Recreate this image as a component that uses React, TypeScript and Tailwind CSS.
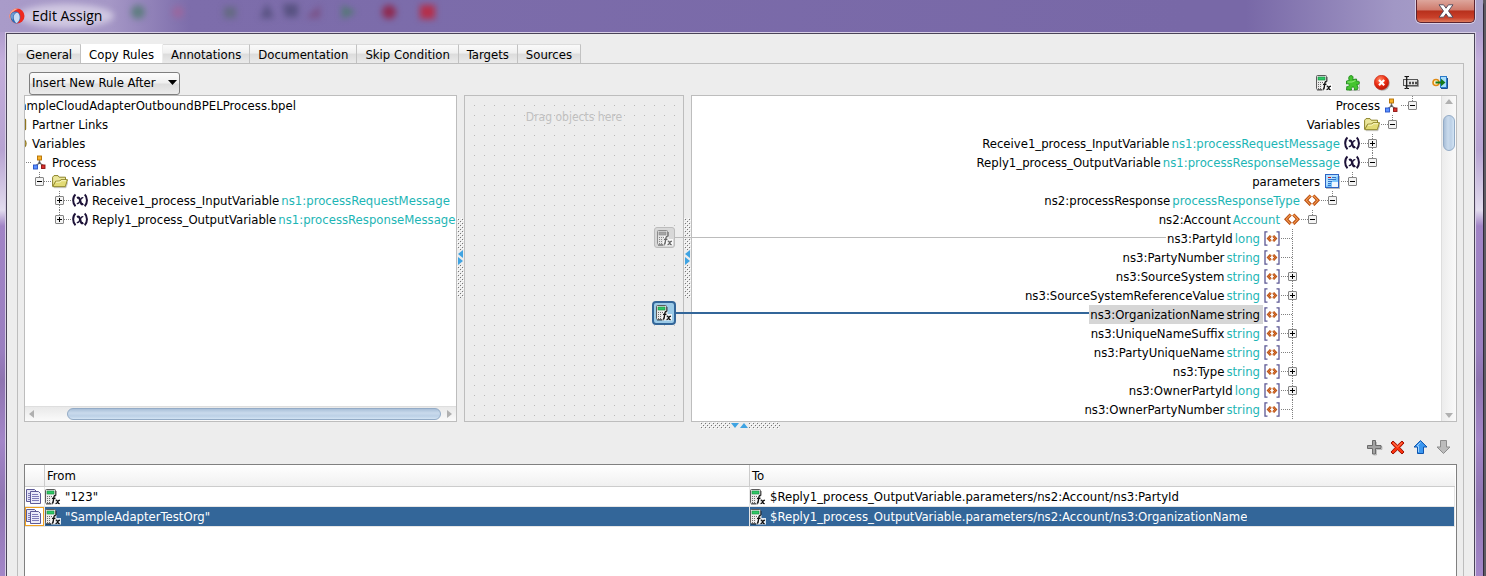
import React, { useState } from "react";

type IconProps = { muted?: boolean };

function CalcIcon({ muted = false }: IconProps) {
  const key = muted ? "#8a8a8a" : "#6d6d6d";
  const ink = muted ? "#666" : "#111";
  return (
    <svg width="16" height="16" viewBox="0 0 16 16" aria-hidden="true" className="block shrink-0">
      <rect x="0.5" y="0.5" width="10" height="14" rx="1" fill={muted ? "#e4e4e4" : "#eceaea"} stroke={muted ? "#8c8c8c" : "#5b5b5b"} />
      <path d="M11.500 2v5M1 15.500h7" stroke="#00000055" />
      <rect x="2" y="2" width="7" height="3" fill={muted ? "#a5a5a5" : "#2fc765"} stroke={muted ? "#8a8a8a" : "#138a3d"} strokeWidth="0.6" />
      <path d="M2 7h1v1H2zM4 7h1v1H4zM6 7h1v1H6zM2 9h1v1H2zM4 9h1v1H4zM2 11h1v1H2zM4 11h1v1H4zM2 13h1v1H2zM4 13h1v1H4z" fill={key} />
      <path d="M7 6h4.500v3H16v6.500H6V11h1z" fill="#fff" fillOpacity="0.85" />
      <path d="M10.800 6.600c-1.200-.5-1.700.3-1.900 1.500L8.100 13c-.2.900-.6 1.200-1.300.9M7 9.400h3.400" fill="none" stroke={ink} strokeWidth="1.400" />
      <path d="M10.800 11.200l1 .2 1.700 3 1.200.2M14.900 11.100l-1.300.5-1.900 2.600-1.200.5" fill="none" stroke={ink} strokeWidth="1.200" />
    </svg>
  );
}

function PuzzleIcon() {
  return (
    <svg width="16" height="16" viewBox="0 0 16 16" aria-hidden="true" className="block">
      <path d="M14.500 6v9.500H4" stroke="#00000033" fill="none" />
      <path d="M1.500 6l2.800-.5C3.300 3.500 3.500.8 5.800.6s2.800 2 1.800 4L11.500 4l.3 2.600c1.200-.8 2.500-.3 2.500 1.200 0 1.600-1.400 2.100-2.500 1.500l1.200 3.200-.5 2-3.200.5c.6-2-.3-3-1.500-3s-1.900 1.200-1.200 3H1.500l.3-3.500c1.500.4 2.400-.3 2.400-1.500S3 8.400 1.500 9z" fill="#45c52f" stroke="#1f8a1c" strokeWidth="0.900" />
      <path d="M2.500 7h4.500l3.500-1.500" stroke="#94ec7c" fill="none" />
    </svg>
  );
}

function DeleteRoundIcon() {
  return (
    <svg width="16" height="16" viewBox="0 0 16 16" aria-hidden="true" className="block">
      <defs>
        <radialGradient id="ball" cx="0.4" cy="0.3" r="0.8">
          <stop offset="0" stopColor="#ff8a66" />
          <stop offset="0.5" stopColor="#ec2d12" />
          <stop offset="1" stopColor="#a80f05" />
        </radialGradient>
      </defs>
      <circle cx="8.500" cy="8.500" r="7.300" fill="#00000044" />
      <circle cx="7.500" cy="7.500" r="7.200" fill="url(#ball)" stroke="#c4200c" strokeWidth="0.600" />
      <path d="M5 5l5.200 5.200M10.200 5L5 10.200" stroke="#fff" strokeWidth="2.200" />
    </svg>
  );
}

function RenameIcon() {
  return (
    <svg width="16" height="16" viewBox="0 0 16 16" aria-hidden="true" className="block">
      <rect x="0.500" y="4.500" width="14" height="6" fill="#e6e6e6" stroke="#555" />
      <path d="M2 11.500h13.500V5" stroke="#999" fill="none" />
      <path d="M6.500 7h1v2h-1zM9.500 7h1v2h-1zM12.500 7h1v2h-1z" fill="#999" stroke="#444" strokeWidth="0.900" />
      <path d="M1.500 1.500h1.500l.7.800.8-.8H6M1.500 13.500h1.500l.7-.8.800.8H6M3.700 2v11" fill="none" stroke="#111" strokeWidth="1.200" />
    </svg>
  );
}

function GoToIcon() {
  return (
    <svg width="16" height="16" viewBox="0 0 16 16" aria-hidden="true" className="block">
      <rect x="8.500" y="1.500" width="6" height="11" fill="#a9defc" stroke="#2b7bc9" />
      <path d="M15.500 3v10.500H9" stroke="#1d4f93" fill="none" />
      <circle cx="4" cy="7.500" r="3" fill="#fff3c8" stroke="#e08a12" strokeWidth="1.600" />
      <path d="M3.500 7.500H11" stroke="#157a1b" strokeWidth="2" />
      <path d="M9 3.700l4.500 3.800L9 11.300z" fill="#157a1b" />
    </svg>
  );
}

function ProcessIcon() {
  return (
    <svg width="16" height="16" viewBox="0 0 16 16" aria-hidden="true" className="block">
      <path d="M7.500 5v3.500M7.500 8L4 10.500M7.500 8l4 2.500" stroke="#777" strokeWidth="1.300" fill="none" />
      <rect x="5.500" y="1" width="4" height="4" fill="#f9b32a" stroke="#b36f00" strokeWidth="0.900" />
      <rect x="1.500" y="10" width="4" height="4" fill="#5d93ff" stroke="#2450c8" strokeWidth="0.900" />
      <rect x="9.500" y="10" width="3.500" height="3.500" fill="#d9302c" stroke="#8d1512" strokeWidth="0.900" />
      <rect x="6.500" y="6.800" width="2" height="2" fill="#555" />
    </svg>
  );
}

function FolderIcon() {
  return (
    <svg width="16" height="16" viewBox="0 0 16 16" aria-hidden="true" className="block">
      <path d="M.6 12V3.200L2 1.600h4l1.200 1.600h6.300v3" fill="#ece79b" stroke="#8c8328" />
      <path d="M.7 12.700L3.600 7.200l4.200-.2 1-1.300h6.700l-2.200 7z" fill="#e2db75" stroke="#8c8328" />
      <path d="M4 8.200L8.300 8l1-1.300H14" fill="none" stroke="#fbf8c6" />
      <path d="M2 13.700h12l2-6" fill="none" stroke="#00000033" />
    </svg>
  );
}

function PartnerIcon() {
  return (
    <svg width="16" height="16" viewBox="0 0 16 16" aria-hidden="true" className="block">
      <rect x="1.500" y="2.500" width="12" height="10" rx="0.500" fill="#e8da80" stroke="#8f7620" strokeWidth="1.400" />
    </svg>
  );
}

function VariableGroupIcon() {
  return (
    <svg width="16" height="16" viewBox="0 0 16 16" aria-hidden="true" className="block">
      <circle cx="9.300" cy="7.500" r="4.700" fill="#e8d060" stroke="#8f7620" strokeWidth="1.400" />
    </svg>
  );
}

function VariableIcon() {
  return (
    <svg width="16" height="16" viewBox="0 0 16 16" aria-hidden="true" className="block">
      <g fill="none" stroke="#1d1238">
        <path d="M3.500 1.500C.4 4 .4 10.500 3.500 13.300M12.700 1.500c3 2.500 3 9 0 11.800" strokeWidth="2" />
        <path d="M5 5c1.700-.9 2.400 0 2.900 1.800l.9 3c.4 1.400 1.100 1.800 2.500 1" strokeWidth="2.200" />
        <path d="M11.300 5c-1.200-.8-2 .2-3 2.200S6.500 11.300 4.800 10.300" strokeWidth="1.400" />
      </g>
    </svg>
  );
}

function PartIcon() {
  return (
    <svg width="16" height="16" viewBox="0 0 16 16" aria-hidden="true" className="block">
      <rect x="1.500" y="0.500" width="13" height="13" fill="#7cc6fb" stroke="#2c63c4" />
      <path d="M2 1h12v1L2 12z" fill="#b3e0ff" />
      <path d="M8 13V8h6v5z" fill="#eef7ff" />
      <path d="M4 3.500h3" stroke="#d41515" />
      <path d="M8 3.500h4M4 5.500h8M4 7.500h4M4 9.500h3M4 11.500h3" stroke="#3272c8" />
      <path d="M2 14.500h13.500V2" stroke="#00000044" fill="none" />
    </svg>
  );
}

function ElementIcon() {
  return (
    <svg width="16" height="16" viewBox="0 0 16 16" aria-hidden="true" className="block">
      <g fill="none">
        <path d="M6.700 2.500L2.200 7.200l4.500 4.700M9.300 2.500l4.500 4.700-4.500 4.700" stroke="#b4480f" strokeWidth="3.200" />
        <path d="M6.700 2.500L2.200 7.200l4.500 4.700M9.300 2.500l4.500 4.700-4.500 4.700" stroke="#f39a4c" strokeWidth="1.200" />
      </g>
    </svg>
  );
}

function SimpleElementIcon() {
  return (
    <svg width="16" height="16" viewBox="0 0 16 16" aria-hidden="true" className="block">
      <path d="M3.500.800H1v13.400h2.500M12.500.800H15v13.400h-2.500" fill="none" stroke="#5c5894" strokeWidth="1.300" />
      <g fill="none">
        <path d="M6.800 4.800L4.300 7.500l2.500 2.700M9.200 4.800l2.500 2.700-2.500 2.700" stroke="#b4480f" strokeWidth="2.500" />
        <path d="M6.800 4.800L4.300 7.500l2.500 2.700M9.200 4.800l2.500 2.700-2.500 2.700" stroke="#f0954a" strokeWidth="0.800" />
      </g>
    </svg>
  );
}

function CopyIcon() {
  return (
    <svg width="16" height="16" viewBox="0 0 16 16" aria-hidden="true" className="block">
      <path d="M.5.500h8l2 2v10H.5z" fill="#e4e4f6" stroke="#5e5a96" />
      <path d="M2 4.500h3M2 6.500h3M2 8.500h3M2 10.500h3" stroke="#7f7bb8" />
      <path d="M4.500 2.500h8l2 2v10h-10z" fill="#ececfa" stroke="#5e5a96" />
      <path d="M6 5.500h6M6 7.500h7M6 9.500h7M6 11.500h7" stroke="#7f7bb8" />
    </svg>
  );
}

function PlusIcon() {
  return (
    <svg width="16" height="16" viewBox="0 0 16 16" aria-hidden="true" className="block">
      <path d="M9.500 2v4.500H15v3H9.500V15h-3" fill="none" stroke="#00000033" />
      <path d="M5.500.500h3v5H14v3H8.500V14h-3V8.500H.5v-3h5z" fill="#a3a3a3" stroke="#6b6b6b" />
    </svg>
  );
}

function RemoveIcon() {
  return (
    <svg width="16" height="16" viewBox="0 0 16 16" aria-hidden="true" className="block">
      <path d="M3 1l4.500 4.200L12 1l2 2-4.200 4.500L14 12l-2 2-4.500-4.200L3 14l-2-2 4.200-4.500L1 3z" fill="#fb340f" stroke="#9c1205" />
      <path d="M3 2.800L7.500 7 12 2.800" fill="none" stroke="#ff9a78" strokeWidth="0.800" />
    </svg>
  );
}

function ArrowIcon({ down = false }: { down?: boolean }) {
  return (
    <svg width="16" height="16" viewBox="0 0 16 16" aria-hidden="true" className="block">
      {down ? (
        <path d="M4.500.500h6V7H14l-6.500 6.500L1 7h3.500z" fill="#bcbcbc" stroke="#8d8d8d" />
      ) : (
        <>
          <path d="M7.500.600L14 7h-3.500v6.500h-6V7H1z" fill="#3b97f0" stroke="#0f55ae" />
          <path d="M7.500 2.500L4 6h1.500v6" fill="none" stroke="#9dd2ff" />
        </>
      )}
    </svg>
  );
}

function LogoIcon() {
  return (
    <svg width="16" height="16" viewBox="0 0 16 16" aria-hidden="true" className="block shrink-0">
      <circle cx="8" cy="8" r="7.500" fill="#ee2a20" />
      <path d="M8 15.500A7.500 7.500 0 1 1 9.500.700C6 2 3.500 3.500 3 6.500z" fill="#f4a592" />
      <path d="M1.500 6.500C3 3.800 6 2.800 8.500 4c2.700 1.300 3.300 4.500 2.500 7.200-.6 2-1.700 3.400-3.200 4.200C4 15.500.8 12 1.500 6.500z" fill="#3268b4" />
      <path d="M8 4.500c-2.500.8-3.700 3.200-3.200 6 .3 1.800 1.200 3.500 2.700 4.700 2.200-1.300 3.400-3.800 3.200-6.300C10.500 6.600 9.600 5 8 4.500z" fill="#c9dcf2" />
      <path d="M2 7c1-2 3-3 5-2.500C4.500 6 3.500 8.500 4 12 2.300 11 1.600 9 2 7z" fill="#6f9bd2" />
    </svg>
  );
}

type IconKind = "process" | "folder" | "variable" | "part" | "element" | "simple" | "partner" | "group";

function NodeIcon({ kind }: { kind: IconKind }) {
  switch (kind) {
    case "process": return <ProcessIcon />;
    case "folder": return <FolderIcon />;
    case "variable": return <VariableIcon />;
    case "part": return <PartIcon />;
    case "element": return <ElementIcon />;
    case "simple": return <SimpleElementIcon />;
    case "partner": return <PartnerIcon />;
    case "group": return <VariableGroupIcon />;
  }
}

type Toggle = "plus" | "minus" | "none";

/* Expander box with its dotted guides; the box sits at the left of the drawing. */
function Expander({ toggle, continues = false, flip = false }: { toggle: Toggle; continues?: boolean; flip?: boolean }) {
  return (
    <svg width="16" height="19" viewBox="0 0 16 19" aria-hidden="true" className={flip ? "block shrink-0 -scale-x-100" : "block shrink-0"}>
      <path d={continues ? "M4.500 0v19" : "M4.500 0v9"} stroke="#808080" strokeDasharray="1 1" />
      <path d="M5 9.500h11" stroke="#808080" strokeDasharray="1 1" />
      {toggle !== "none" && (
        <>
          <rect x="0.500" y="5.500" width="8" height="8" rx="0.500" fill="#f4f4f4" stroke="#858585" />
          <path d="M2 9.500h5" stroke="#000" />
          {toggle === "plus" && <path d="M4.500 7v5" stroke="#000" />}
        </>
      )}
    </svg>
  );
}

type TreeNode = {
  label: string;
  type?: string;
  icon?: IconKind;
  toggle: Toggle;
  continues?: boolean;
  link?: "idle" | "active";
  children?: TreeNode[];
};

const sourceTree: TreeNode[] = [
  {
    label: "SampleCloudAdapterOutboundBPELProcess.bpel",
    icon: "process",
    toggle: "minus",
    children: [
      { label: "Partner Links", icon: "partner", toggle: "plus" },
      {
        label: "Variables",
        icon: "group",
        toggle: "minus",
        children: [
          {
            label: "Process",
            icon: "process",
            toggle: "minus",
            children: [
              {
                label: "Variables",
                icon: "folder",
                toggle: "minus",
                children: [
                  { label: "Receive1_process_InputVariable", type: "ns1:processRequestMessage", icon: "variable", toggle: "plus", continues: true },
                  { label: "Reply1_process_OutputVariable", type: "ns1:processResponseMessage", icon: "variable", toggle: "plus" },
                ],
              },
            ],
          },
        ],
      },
    ],
  },
];

const accountFields: TreeNode[] = [
  { label: "ns3:PartyId", type: "long", icon: "simple", toggle: "none", continues: true, link: "idle" },
  { label: "ns3:PartyNumber", type: "string", icon: "simple", toggle: "none", continues: true },
  { label: "ns3:SourceSystem", type: "string", icon: "simple", toggle: "plus", continues: true },
  { label: "ns3:SourceSystemReferenceValue", type: "string", icon: "simple", toggle: "plus", continues: true },
  { label: "ns3:OrganizationName", type: "string", icon: "simple", toggle: "none", continues: true, link: "active" },
  { label: "ns3:UniqueNameSuffix", type: "string", icon: "simple", toggle: "plus", continues: true },
  { label: "ns3:PartyUniqueName", type: "string", icon: "simple", toggle: "none", continues: true },
  { label: "ns3:Type", type: "string", icon: "simple", toggle: "plus", continues: true },
  { label: "ns3:OwnerPartyId", type: "long", icon: "simple", toggle: "plus", continues: true },
  { label: "ns3:OwnerPartyNumber", type: "string", icon: "simple", toggle: "none", continues: true },
];

const targetTree: TreeNode[] = [
  {
    label: "Process",
    icon: "process",
    toggle: "minus",
    children: [
      {
        label: "Variables",
        icon: "folder",
        toggle: "minus",
        children: [
          { label: "Receive1_process_InputVariable", type: "ns1:processRequestMessage", icon: "variable", toggle: "plus", continues: true },
          {
            label: "Reply1_process_OutputVariable",
            type: "ns1:processResponseMessage",
            icon: "variable",
            toggle: "minus",
            children: [
              {
                label: "parameters",
                icon: "part",
                toggle: "minus",
                children: [
                  {
                    label: "ns2:processResponse",
                    type: "processResponseType",
                    icon: "element",
                    toggle: "minus",
                    children: [{ label: "ns2:Account", type: "Account", icon: "element", toggle: "minus", children: accountFields }],
                  },
                ],
              },
            ],
          },
        ],
      },
    ],
  },
];

function SourceNodes({ nodes, nested = false }: { nodes: TreeNode[]; nested?: boolean }) {
  return (
    <ul className={nested ? "pl-5" : ""}>
      {nodes.map((node) => (
        <li key={node.label}>
          <div className="flex h-[19px] items-center whitespace-nowrap">
            <Expander toggle={node.toggle} continues={node.continues} />
            <span className="w-[21px] shrink-0 pl-px">{node.icon && <NodeIcon kind={node.icon} />}</span>
            <span className="flex gap-[2px]">
              <span>{node.label}</span>
              {node.type && <span className="text-[#1db5b5]">{node.type}</span>}
            </span>
          </div>
          {node.children && <SourceNodes nodes={node.children} nested />}
        </li>
      ))}
    </ul>
  );
}

function TargetNodes({ nodes, nested = false }: { nodes: TreeNode[]; nested?: boolean }) {
  return (
    <ul className={nested ? "pr-5" : ""}>
      {nodes.map((node) => (
        <li key={node.label}>
          <div className="flex h-[19px] items-center justify-end whitespace-nowrap">
            {node.link === "idle" && <span className="mb-[3px] h-px flex-1 bg-[#bcbcbc]" />}
            {node.link === "active" && <span className="mb-[3px] h-[2px] flex-1 bg-[#336699]" />}
            <span className={node.link === "active" ? "flex gap-[2px] bg-[#d6d6d6] pr-[3px] pl-px leading-[19px]" : "flex gap-[2px] pr-[3px] pl-px"}>
              <span>{node.label}</span>
              {node.type && <span className={node.link === "active" ? "" : "text-[#1db5b5]"}>{node.type}</span>}
            </span>
            <span className="w-[18px] shrink-0 pl-px">{node.icon && <NodeIcon kind={node.icon} />}</span>
            <Expander toggle={node.toggle} continues={node.continues} flip />
          </div>
          {node.children && <TargetNodes nodes={node.children} nested />}
        </li>
      ))}
    </ul>
  );
}

function Splitter({ horizontal = false }: { horizontal?: boolean }) {
  const id = horizontal ? "grip-h" : "grip-v";
  return (
    <svg width={horizontal ? 80 : 7} height={horizontal ? 7 : 80} viewBox={horizontal ? "0 0 80 7" : "0 0 7 80"} aria-hidden="true" className="block shrink-0">
      <defs>
        <pattern id={id} width="4" height="4" patternUnits="userSpaceOnUse">
          <path d="M1 1h1v1H1zM3 3h1v1H3z" fill="#777" />
          <path d="M2 2h1v1H2zM0 0h1v1H0z" fill="#fff" />
        </pattern>
      </defs>
      <rect width={horizontal ? 80 : 7} height={horizontal ? 7 : 80} fill={`url(#${id})`} />
      {horizontal ? (
        <>
          <path d="M30 0h19v7H30z" fill="#ededed" />
          <path d="M31 1h8l-4 5zM40 6h8l-4-5z" fill="#3fa3e2" />
        </>
      ) : (
        <>
          <path d="M0 32h7v15H0z" fill="#ededed" />
          <path d="M6 32v8l-5-4zM1 39v8l5-4z" fill="#3fa3e2" />
        </>
      )}
    </svg>
  );
}

const tabs = ["General", "Copy Rules", "Annotations", "Documentation", "Skip Condition", "Targets", "Sources"];

const toolbar = [
  { label: "Expression", icon: <CalcIcon /> },
  { label: "Extension", icon: <PuzzleIcon /> },
  { label: "Delete", icon: <DeleteRoundIcon /> },
  { label: "Rename", icon: <RenameIcon /> },
  { label: "Go to", icon: <GoToIcon /> },
];

const ruleActions = [
  { label: "Add rule", icon: <PlusIcon /> },
  { label: "Remove rule", icon: <RemoveIcon /> },
  { label: "Move up", icon: <ArrowIcon /> },
  { label: "Move down", icon: <ArrowIcon down /> },
];

const rules = [
  { from: '"123"', to: "$Reply1_process_OutputVariable.parameters/ns2:Account/ns3:PartyId" },
  { from: '"SampleAdapterTestOrg"', to: "$Reply1_process_OutputVariable.parameters/ns2:Account/ns3:OrganizationName" },
];

function TitleBar() {
  return (
    <header className="relative flex h-8 items-center overflow-hidden bg-[linear-gradient(90deg,#a99bc9_0,#a597c6_110px,#7d6dab_190px,#7868a7_80%,#7868a7_84%,#a197c5_94%,#aaa2ca_100%)]">
      <svg className="absolute top-0 left-0 h-8 w-[480px] blur-[3px]" aria-hidden="true">
        <ellipse cx="66" cy="16" rx="48" ry="12" fill="#d5cde4" opacity="0.9" />
        <g opacity="0.75">
          <circle cx="138" cy="12" r="7" fill="#4d7a6c" />
          <circle cx="178" cy="12" r="6" fill="#a0649a" />
          <rect x="224" y="7" width="12" height="11" fill="#5c6a74" />
          <path d="M260 18l7-15 7 15zM283 4h15v13h-13z" fill="#4c4a74" />
          <path d="M306 18l14-13v13z" fill="#7a4a7c" />
          <path d="M342 5v14l14-7z" fill="#467d62" />
        </g>
        <circle cx="389" cy="12" r="7" fill="#8f2a50" />
        <rect x="420" y="5" width="15" height="14" fill="#b52f4a" />
      </svg>
      <div className="relative flex flex-1 items-center gap-[7px] pl-[9px]">
        <LogoIcon />
        <h1 className="font-['Open_Sans','Noto_Sans',sans-serif] text-[14px] leading-5 text-black">Edit Assign</h1>
      </div>
      <button
        type="button"
        aria-label="Close"
        className="relative mr-2 flex h-[23px] w-[59px] items-center justify-center self-start rounded-b-[5px] border border-t-0 border-[#5b2430] bg-[linear-gradient(180deg,#dda69c_0,#cf7a6c_45%,#b8301c_50%,#c9402a_80%,#dd7a5c_100%)] shadow-[0_0_0_1px_#d9d0e6]"
      >
        <svg width="16" height="14" viewBox="0 0 16 14" aria-hidden="true">
          <path d="M1 .8h4.600L8 4.200 10.400.8H15L10.500 7l4.500 6.200h-4.600L8 9.800l-2.400 3.400H1L5.500 7z" fill="#fff" stroke="#4b4558" strokeWidth="0.900" />
        </svg>
      </button>
    </header>
  );
}

export default function App() {
  const [tab, setTab] = useState("Copy Rules");
  const [selected, setSelected] = useState(1);

  return (
    <div className="flex min-h-screen bg-[#5d5a62] pr-[2px] font-['DejaVu_Sans_Condensed','DejaVu_Sans',sans-serif] text-[13px] leading-4 text-black">
      <div className="flex min-w-0 flex-1 flex-col rounded-tr-md border-r border-[#2f2a3a] bg-[linear-gradient(180deg,#9a8bbf_0,#c3aedb_60px,#b7a3d2_150px,#e2dcee_210px,#a184c6_226px,#9a7fc0_350px,#8e74b0_380px,#a386c8_440px,#8f75b2_500px,#a386c8_100%)]">
        <TitleBar />
        <main className="mr-[7px] ml-[5px] flex flex-1 flex-col border border-b-0 border-[#d8cfe6]">
          <div className="flex flex-1 flex-col border border-b-0 border-[#4a4458] bg-[#ededed] px-[10px] pt-[10px]">
            <div role="tablist" aria-label="Assign sections" className="flex border-l border-[#d0d0d0]">
              {tabs.map((name) => (
                <button
                  key={name}
                  type="button"
                  role="tab"
                  aria-selected={tab === name}
                  onClick={() => setTab(name)}
                  className={
                    tab === name
                      ? "h-[19px] border-t border-r border-[#ededed] border-t-white bg-white px-2 pt-px"
                      : "h-[19px] border-t border-r border-[#c2c2c2] border-t-[#dcdcdc] bg-[linear-gradient(180deg,#fafafa_0,#efefef_45%,#dcdcdc_50%,#eaeaea_100%)] px-2 pt-px"
                  }
                >
                  {name}
                </button>
              ))}
            </div>

            <section className="flex flex-1 flex-col border border-b-0 border-[#bdbdbd] px-[6px]">
              <div className="flex h-[31px] items-center justify-between pt-[7px] pr-[9px] pl-[5px]">
                <div className="relative">
                  <select
                    aria-label="Insert mode"
                    className="block h-[23px] w-[151px] appearance-none rounded-[3px] border border-[#7f7f7f] bg-[linear-gradient(180deg,#fcfcfc_0,#efefef_48%,#dddddd_52%,#ececec_100%)] pl-[2px]"
                  >
                    <option>Insert New Rule After</option>
                    <option>Insert New Rule Before</option>
                  </select>
                  <svg width="9" height="5" viewBox="0 0 9 5" aria-hidden="true" className="pointer-events-none absolute top-2 right-[3px]">
                    <path d="M0 0h9L4.500 5z" fill="#000" />
                  </svg>
                </div>
                <div className="flex gap-[13px]">
                  {toolbar.map((item) => (
                    <button key={item.label} type="button" aria-label={item.label}>
                      {item.icon}
                    </button>
                  ))}
                </div>
              </div>

              <div className="flex">
                <div className="flex w-[433px] shrink-0 flex-col border border-[#bdbdbd] bg-white">
                  <div className="flex-1 overflow-hidden">
                    <div className="-ml-[50px]">
                      <SourceNodes nodes={sourceTree} />
                    </div>
                  </div>
                  <div className="flex h-[15px] items-center border-t border-[#dedede] bg-[linear-gradient(180deg,#e9e9e9,#fafafa)] px-1">
                    <svg width="5" height="8" viewBox="0 0 5 8" aria-hidden="true"><path d="M5 0v8L0 4z" fill="#b0b0b0" /></svg>
                    <div className="mr-[6px] ml-[33px] h-3 flex-1 rounded-full border border-[#93abc6] bg-[linear-gradient(180deg,#a9bfd8,#c9daec_40%,#bcd0e6_70%,#d3e4f4)]" />
                    <svg width="5" height="8" viewBox="0 0 5 8" aria-hidden="true"><path d="M0 0v8l5-4z" fill="#b0b0b0" /></svg>
                  </div>
                </div>

                <div className="flex shrink-0 items-center pb-[2px]"><Splitter /></div>

                <div className="relative w-[220px] shrink-0 border border-[#bdbdbd]">
                  <svg className="absolute inset-0 h-full w-full" aria-hidden="true">
                    <defs>
                      <pattern id="canvas-dots" width="10" height="10" patternUnits="userSpaceOnUse">
                        <path d="M9 9h1v1H9z" fill="#b9b9b9" />
                      </pattern>
                    </defs>
                    <rect width="100%" height="100%" fill="url(#canvas-dots)" />
                  </svg>
                  <p className="relative pt-[13px] text-center text-[12px] text-[#c0c0c0]">Drag objects here</p>
                  <div className="absolute top-[131px] right-[8px] z-10">
                    <button type="button" aria-label="Expression 123" className="flex h-[21px] w-[21px] items-center justify-center rounded-[3px] border border-[#bcbcbc] bg-[#d8d8d8]">
                      <CalcIcon muted />
                    </button>
                    <span className="absolute top-[10px] left-full h-px w-4 bg-[#bcbcbc]" />
                  </div>
                  <div className="absolute top-[205px] right-[7px] z-10">
                    <button type="button" aria-label="Expression SampleAdapterTestOrg" className="flex h-6 w-6 items-center justify-center rounded-[4px] border-2 border-[#336699] bg-[#9ccbe8]">
                      <CalcIcon />
                    </button>
                    <span className="absolute top-[11px] left-full h-[2px] w-4 bg-[#336699]" />
                  </div>
                </div>

                <div className="flex shrink-0 items-center pb-[2px]"><Splitter /></div>

                <div className="flex min-w-0 flex-1 border border-[#bdbdbd] bg-white">
                  <div className="min-w-0 flex-1 overflow-hidden pr-6 pb-[2px]">
                    <TargetNodes nodes={targetTree} />
                  </div>
                  <div className="flex w-[15px] flex-col items-center justify-between border-l border-[#dedede] bg-[linear-gradient(90deg,#ececec,#fafafa)] py-[3px]">
                    <div>
                      <svg width="8" height="5" viewBox="0 0 8 5" aria-hidden="true" className="mx-auto block"><path d="M0 5h8L4 0z" fill="#b0b0b0" /></svg>
                      <div className="mt-[11px] h-9 w-3 rounded-full border border-[#93abc6] bg-[linear-gradient(90deg,#a9bfd8,#c9daec_40%,#bcd0e6_70%,#d3e4f4)]" />
                    </div>
                    <svg width="8" height="5" viewBox="0 0 8 5" aria-hidden="true" className="block"><path d="M0 0h8L4 5z" fill="#b0b0b0" /></svg>
                  </div>
                </div>
              </div>

              <div className="flex justify-center pr-[2px]"><Splitter horizontal /></div>

              <div className="flex h-[35px] items-center justify-end gap-[7px] pt-[2px] pr-[5px]">
                {ruleActions.map((item) => (
                  <button key={item.label} type="button" aria-label={item.label}>
                    {item.icon}
                  </button>
                ))}
              </div>

              <div className="flex-1 border border-b-0 border-[#808080] bg-white pr-px">
                <table className="w-full table-fixed border-separate border-spacing-0 text-left">
                  <thead>
                    <tr className="h-[22px] bg-[linear-gradient(180deg,#ffffff,#f0f0f0)]">
                      <th aria-label="Kind" className="w-5 border-r border-b border-[#cccccc] p-0" />
                      <th className="border-r border-b border-[#cccccc] p-0 pl-[2px] font-normal">From</th>
                      <th className="border-b border-[#cccccc] p-0 pl-[2px] font-normal">To</th>
                    </tr>
                  </thead>
                  <tbody>
                    {rules.map((rule, index) => {
                      const active = index === selected;
                      return (
                        <tr key={rule.to} onClick={() => setSelected(index)}>
                          <td className="border-r border-b border-[#e6e6e6] p-0">
                            <div className={active ? "flex h-[19px] items-center border border-[#f0a020]" : "flex h-[19px] items-center pl-px"}>
                              <CopyIcon />
                            </div>
                          </td>
                          {[rule.from, rule.to].map((text) => (
                            <td key={text} className={active ? "border-r border-b border-[#e6e6e6] bg-[#336699] p-0 text-white" : "border-r border-b border-[#e6e6e6] p-0"}>
                              <div className="flex h-[19px] items-center gap-1">
                                <CalcIcon />
                                <span className="truncate">{text}</span>
                              </div>
                            </td>
                          ))}
                        </tr>
                      );
                    })}
                  </tbody>
                </table>
              </div>
            </section>
          </div>
        </main>
      </div>
    </div>
  );
}
